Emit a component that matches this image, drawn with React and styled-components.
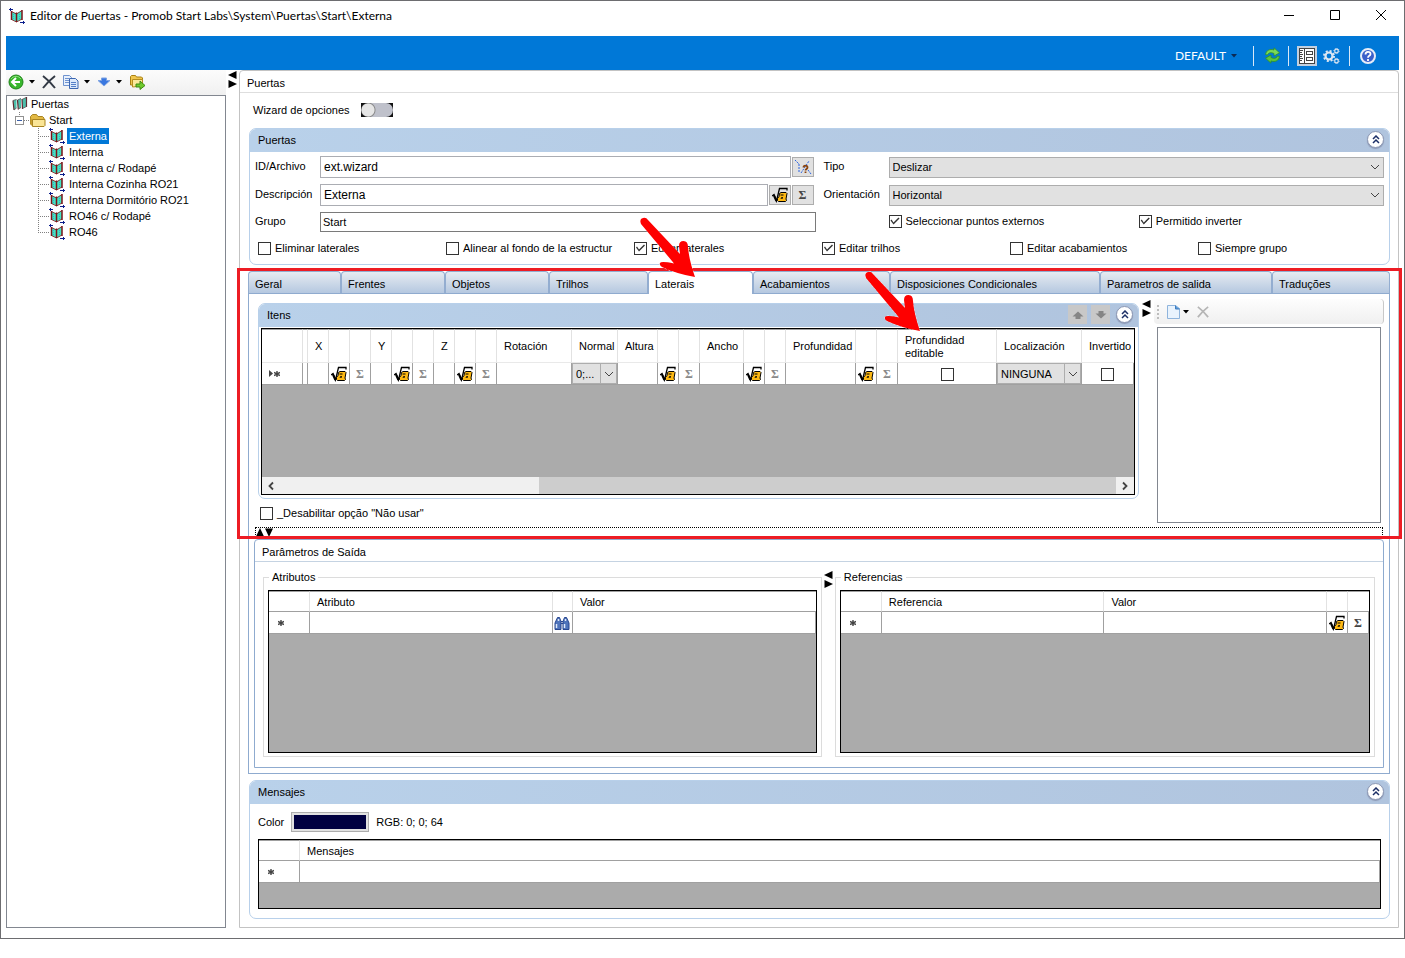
import React from 'react';
import styled, { createGlobalStyle, css } from 'styled-components';

const TREE_ITEMS = [
  'Externa',
  'Interna',
  'Interna c/ Rodapé',
  'Interna Cozinha RO21',
  'Interna Dormitório RO21',
  'RO46 c/ Rodapé',
  'RO46',
];

const TABS = [
  { name: 'Geral', size: 93 },
  { name: 'Frentes', size: 104 },
  { name: 'Objetos', size: 104 },
  { name: 'Trilhos', size: 99 },
  { name: 'Laterais', size: 105 },
  { name: 'Acabamientos', size: 137 },
  { name: 'Disposiciones Condicionales', size: 210 },
  { name: 'Parametros de salida', size: 172 },
  { name: 'Traduções', size: 118 },
];

const OPTIONS = [
  { name: 'Eliminar laterales' },
  { name: 'Alinear al fondo de la estructur' },
  { name: 'Editar laterales', on: true },
  { name: 'Editar trilhos', on: true },
  { name: 'Editar acabamientos' },
  { name: 'Siempre grupo' },
];

const ITEM_COLUMNS = [
  { kind: 'marker', width: 41 },
  { kind: 'text', width: 5 },
  { kind: 'text', name: 'X', width: 21 },
  { kind: 'root', width: 21 },
  { kind: 'sum', width: 21 },
  { kind: 'text', name: 'Y', width: 21 },
  { kind: 'root', width: 21 },
  { kind: 'sum', width: 21 },
  { kind: 'text', name: 'Z', width: 21 },
  { kind: 'root', width: 21 },
  { kind: 'sum', width: 21 },
  { kind: 'text', name: 'Rotación', width: 75 },
  { kind: 'select', name: 'Normal', value: '0;...', width: 46 },
  { kind: 'text', name: 'Altura', width: 40 },
  { kind: 'root', width: 21 },
  { kind: 'sum', width: 21 },
  { kind: 'text', name: 'Ancho', width: 44 },
  { kind: 'root', width: 21 },
  { kind: 'sum', width: 21 },
  { kind: 'text', name: 'Profundidad', width: 70 },
  { kind: 'root', width: 21 },
  { kind: 'sum', width: 21 },
  { kind: 'check', name: 'Profundidad editable', width: 99 },
  { kind: 'select', name: 'Localización', value: 'NINGUNA', width: 85 },
  { kind: 'check', name: 'Invertido' },
];

const ATTRIBUTE_COLUMNS = [
  { kind: 'marker', width: 41 },
  { kind: 'text', name: 'Atributo' },
  { kind: 'find', width: 20 },
  { kind: 'text', name: 'Valor' },
];

const REFERENCE_COLUMNS = [
  { kind: 'marker', width: 41 },
  { kind: 'text', name: 'Referencia' },
  { kind: 'text', name: 'Valor' },
  { kind: 'root', width: 21 },
  { kind: 'sum', width: 21, dark: true },
];

const MESSAGE_COLUMNS = [
  { kind: 'marker', width: 41 },
  { kind: 'text', name: 'Mensajes' },
];

/* icons */

const DoorIcon = () => (
  <svg width="16" height="16" viewBox="0 0 16 16" aria-hidden="true">
    <path d="M2.500 3.500L7 5.500V13.500L2.500 11.500zM8 5.500L13 2.500V11L8 13.500z" fill="#45e3c3" />
    <path d="M4.500 6v5.500M10.500 6v5" stroke="#2fb4cf" strokeDasharray="1 1" />
    <path d="M2.500 3v9M7.500 4.500v9.500M13 2v10" stroke="#7c1418" strokeWidth="1.500" />
    <path d="M2.500 3.500L7.500 6 13 2.500M2.500 11.500L7.500 14 13 11" stroke="#7c1418" strokeWidth=".8" fill="none" />
    <path d="M0 1h4v1H0zM1 0h1v3H1zM11 14h5v1h-5zM14 13h1v3h-1z" fill="#0c1f8c" shapeRendering="crispEdges" />
  </svg>
);

const DoorsIcon = () => (
  <svg width="16" height="16" viewBox="0 0 16 16" aria-hidden="true">
    <path d="M1 4.500l3.500-1V12L2 14zM5.500 4L9 2.500V11.500L6.500 13zM10 3.500L14 1.500V10.500L10.500 12.500z" fill="#4cbfab" />
    <path d="M1 4.500L2 14M5.500 4l.8 9.500M10 3l.5 10M14.500 1v10" stroke="#5f2b31" strokeWidth="1.200" />
    <path d="M1 4.500l3.500-1M5.500 4L9 2.500M10 3.500l4-2M2 14l2.500-2M6.500 13L9 11.500M10.500 12.500l4-2" stroke="#5b5256" strokeWidth=".8" />
  </svg>
);

const FolderIcon = () => (
  <svg width="16" height="16" viewBox="0 0 16 16" aria-hidden="true">
    <path d="M.5 12V4.500L2.500 2.500h4l1.500 2h4.500l1.500 1.500v7z" fill="#e2b944" stroke="#a88423" />
    <path d="M2.500 14.500l-2-2V6l2 1.500z" fill="#c99f30" />
    <path d="M2.500 14.500v-7h12.500v6l-1 1z" fill="#fae596" stroke="#a88423" />
  </svg>
);

const BackIcon = () => (
  <svg width="16" height="16" viewBox="0 0 16 16" aria-hidden="true">
    <circle cx="8" cy="8" r="7" fill="#38b62c" stroke="#1e8418" />
    <path d="M3 5a6 6 0 0 1 10 0" stroke="#8be07c" fill="none" />
    <path d="M8 4L4 8l4 4M4.500 8H12" stroke="#fff" strokeWidth="2" fill="none" />
  </svg>
);

const DeleteIcon = ({ color = '#333a45', size = 14 }) => (
  <svg width={size} height={size} viewBox="0 0 14 14" aria-hidden="true">
    <path d="M1 1c4 3 8 7 12 12M13 1C9 4 5 8 1 13" stroke={color} strokeWidth="2" fill="none" />
  </svg>
);

const CopyIcon = () => (
  <svg width="16" height="14" viewBox="0 0 16 14" aria-hidden="true">
    <path d="M.5.5h6l2 2v8h-8z" fill="#e8f0fc" stroke="#6f93cf" />
    <path d="M2 3.500h4M2 5.500h5M2 7.500h4" stroke="#6f93cf" />
    <path d="M6.500 3.500h6l2.500 2.500v7.500h-8.500z" fill="#dce9fb" stroke="#3c66b0" />
    <path d="M8 7.500h5M8 9.500h5M8 11.500h5" stroke="#5580c8" />
  </svg>
);

const DownIcon = () => (
  <svg width="14" height="10" viewBox="0 0 14 10" aria-hidden="true">
    <path d="M4.500 1h5v2.500H13L7 9 1 3.500h3.500z" fill="#3a78e0" stroke="#7ea3e2" />
  </svg>
);

const ExportIcon = () => (
  <svg width="16" height="16" viewBox="0 0 16 16" aria-hidden="true">
    <path d="M1.500 11V2.500l1-1h4l1 1.500h5l1 1v7z" fill="#f0c64e" stroke="#a98114" />
    <path d="M3.500 13V5.500h10V12z" fill="#fbe99a" stroke="#b58d20" />
    <path d="M7 10h4V7l5 4.500-5 4v-2.500H7z" fill="#6fca2c" stroke="#3d8a12" />
  </svg>
);

const Caret = ({ color = '#000' }) => (
  <svg width="6" height="4" viewBox="0 0 6 4" aria-hidden="true">
    <path d="M0 0h6L3 3.500z" fill={color} />
  </svg>
);

const RefreshIcon = () => (
  <svg width="17" height="17" viewBox="0 0 17 17" aria-hidden="true">
    <path d="M1.500 7.500C2 3.500 6 1.500 10 3V.8l5.500 5L10 9V6.500C7 5 4.500 5.500 3.500 8z" fill="#79d957" stroke="#2f8f2a" strokeWidth=".8" />
    <path d="M15.500 9.500c-.5 4-4.500 6-8.500 4.500v2.200l-5.500-5L7 8v2.500c3 1.500 5.500 1 6.500-1.500z" fill="#5cc43c" stroke="#2f8f2a" strokeWidth=".8" />
  </svg>
);

const FormIcon = () => (
  <svg width="16" height="16" viewBox="0 0 16 16" shapeRendering="crispEdges" aria-hidden="true">
    <path d="M0 0h16v16h-16z" fill="#444" />
    <path d="M1 1h4v14h-4zM6 1h9v14h-9z" fill="#fff" />
    <path d="M1 2h3v1h-3zM1 4h2v1h-2zM1 6h3v1h-3zM1 8h2v1h-2zM1 10h3v1h-3zM1 12h2v1h-2zM7 3h7v4h-7zM7 9h7v4h-7z" fill="#444" />
    <path d="M8 4h5v2h-5zM8 10h5v2h-5z" fill="#fff" />
  </svg>
);

const GearsIcon = () => (
  <svg width="17" height="16" viewBox="0 0 17 16" fill="none" stroke="#dce6f2" aria-hidden="true">
    <circle cx="6" cy="8" r="3.500" strokeWidth="2.200" />
    <circle cx="6" cy="8" r="5" strokeWidth="2" strokeDasharray="2 1.930" />
    <circle cx="13.500" cy="3" r="1.800" strokeWidth="1.200" />
    <circle cx="13.500" cy="3" r="2.600" strokeDasharray="1 1" />
    <circle cx="13.500" cy="13" r="1.800" strokeWidth="1.200" />
    <circle cx="13.500" cy="13" r="2.600" strokeDasharray="1 1" />
  </svg>
);

const HelpIcon = () => (
  <svg width="18" height="18" viewBox="0 0 18 18" aria-hidden="true">
    <circle cx="9" cy="9" r="7" fill="#3a5fca" stroke="#e6ecf8" strokeWidth="2" />
    <path d="M6.500 7.500C6.500 4 11.500 4 11.500 7c0 2-2.500 1.700-2.500 3.700M9 12v2" stroke="#fff" strokeWidth="1.800" fill="none" />
  </svg>
);

const RootIcon = () => (
  <svg width="16" height="16" viewBox="0 0 16 16" aria-hidden="true">
    <path d="M0 9l2-1.500L4.500 14 7.500 1.500H15V3.500" fill="none" stroke="#000" strokeWidth="1.300" />
    <path d="M1.800 8l2.600 6" stroke="#000" strokeWidth="2" />
    <path d="M7.500 6.500l1.500-1h5l1 1-1 5.500.5 1.500-1 1H6.500l-1-1v-2L7 9.500z" fill="#fdb813" stroke="#000" />
    <path d="M8.500 12l1-2h1.500l-.5 2zM8.500 7.500h3v1h-3z" fill="#000" />
    <path d="M9.300 11.500l.4-.8h.6l-.2.800z" fill="#fdb813" />
  </svg>
);

const PathIcon = () => (
  <svg width="18" height="16" viewBox="0 0 18 16" aria-hidden="true">
    <path d="M1 1l4 4M5 5v8M7 14l8-12M14 11l3 4" stroke="#2a62e0" strokeDasharray="2 1" fill="none" />
    <path d="M9.500 8.500c0-2.500 4-2.500 4 0 0 1.500-2 1.500-2 3M11.500 12.500v1.500" stroke="#8a4410" strokeWidth="1.800" fill="none" />
  </svg>
);

const BinocularsIcon = () => (
  <svg width="16" height="14" viewBox="0 0 16 14" aria-hidden="true">
    <path d="M3.500 1.500h2l1.500 4v8H1V7zM10.500 1.500h2L15 7v6.500H9v-8z" fill="#4f74bb" stroke="#27458f" />
    <path d="M2.500 8v4M4.500 3v2M10.500 8v4M11.500 3v2" stroke="#dfe9fa" strokeWidth="1.500" />
    <path d="M7 5.500h2M7 7.500h2" stroke="#27458f" />
  </svg>
);

const PageIcon = () => (
  <svg width="13" height="14" viewBox="0 0 13 14" aria-hidden="true">
    <path d="M.5.5h8l4 3v10H.5z" fill="#e9f3fd" stroke="#8fb4dc" />
    <path d="M8.500.5v3.500h4" fill="#5d9ad6" stroke="#3f7dc0" />
  </svg>
);

const Chevron = ({ dir = 'down' }) => (
  <svg width="10" height="10" viewBox="0 0 10 10" fill="none" stroke="#444" aria-hidden="true">
    {dir === 'down' && <path d="M1 3l4 4 4-4" />}
    {dir === 'left' && <path d="M7 1.500L3.500 5 7 8.500" strokeWidth="1.800" />}
    {dir === 'right' && <path d="M3 1.500L6.500 5 3 8.500" strokeWidth="1.800" />}
  </svg>
);

const CollapseIcon = () => (
  <svg width="8" height="9" viewBox="0 0 8 9" fill="none" stroke="#1c2f66" strokeWidth="1.500" aria-hidden="true">
    <path d="M1 4l3-3 3 3M1 8l3-3 3 3" />
  </svg>
);

const MoveIcon = ({ down }) => (
  <svg width="12" height="8" viewBox="0 0 12 8" aria-hidden="true">
    <path d={down ? 'M3.500 0h5v2.500h3L6 7.500.5 2.500h3z' : 'M6 .5l5.500 5h-3V8h-5V5.500h-3z'} fill="#858585" />
  </svg>
);

const SplitArrows = () => (
  <svg width="9" height="17" viewBox="0 0 9 17" aria-hidden="true">
    <path d="M8.500 0v8L0 4zM.5 9v8L9 13z" />
  </svg>
);

const TreeGuide = ({ last }) => (
  <svg width="11" height="16" viewBox="0 0 11 16" shapeRendering="crispEdges" stroke="#808080" strokeDasharray="1 1" aria-hidden="true">
    <path d={last ? 'M.5 0v9' : 'M.5 0v16'} />
    <path d="M0 8.500h11" />
  </svg>
);

const PointerArrow = () => (
  <svg width="60" height="64" viewBox="0 0 60 64" aria-hidden="true">
    <path
      d="M2 8Q0 3 4 2Q7 1 9 4L41 38L40 30Q40 25 44.500 25Q49 25 49 31Q50 44 56 61Q38 58 23 51Q20 49 21 47Q22 45 35 47.500L33 45Z"
      fill="#fe0000"
      stroke="#fff"
      strokeDasharray="2 2"
      paintOrder="stroke"
    />
  </svg>
);

/* shared pieces */

const Check = ({ name, on }) => (
  <CheckLabel>
    <Box type="checkbox" defaultChecked={on} />
    {name}
  </CheckLabel>
);

const Collapse = () => (
  <RoundButton type="button" aria-label="Contraer">
    <CollapseIcon />
  </RoundButton>
);

const Combo = ({ id, label, value, small }) => (
  <ComboWrap>
    <Select id={id} aria-label={label} defaultValue={value} $small={small}>
      <option>{value}</option>
    </Select>
    <ComboArrow $small={small}>
      <Chevron />
    </ComboArrow>
  </ComboWrap>
);

const Cell = ({ col, current }) => {
  if (col.kind === 'marker') {
    return (
      <Marker $current={current}>
        {current && <svg width="5" height="7" viewBox="0 0 5 7"><path d="M0 0l4 3.500L0 7z" fill="#444" /></svg>}
        <svg width="6" height="6" viewBox="0 0 6 6" stroke="#444" strokeWidth="1.400"><path d="M3 0v6M0 1.500l6 3M6 1.500l-6 3" /></svg>
      </Marker>
    );
  }
  if (col.kind === 'root') return <CellButton type="button" aria-label="Fórmula"><RootIcon /></CellButton>;
  if (col.kind === 'sum') return <CellButton type="button" $dark={col.dark}>Σ</CellButton>;
  if (col.kind === 'find') return <CellButton type="button" aria-label="Buscar"><BinocularsIcon /></CellButton>;
  if (col.kind === 'check') return <Box type="checkbox" aria-label={col.name} />;
  if (col.kind === 'select') return <Combo small label={col.name} value={col.value} />;
  return null;
};

const DataTable = ({ columns, tall }) => (
  <Table>
    <colgroup>
      {columns.map((col, i) => (
        <col key={i} width={col.width} />
      ))}
    </colgroup>
    <thead>
      <tr>
        {columns.map((col, i) => (
          <Th key={i} $tall={tall}>{col.name}</Th>
        ))}
      </tr>
    </thead>
    <tbody>
      <tr>
        {columns.map((col, i) => (
          <Td key={i}>
            <Cell col={col} current={tall} />
          </Td>
        ))}
      </tr>
    </tbody>
  </Table>
);

const App = () => (
  <Page>
    <GlobalStyle />
    <Window>
      <TitleBar>
        <DoorIcon />
        <Title>Editor de Puertas - Promob Start Labs\System\Puertas\Start\Externa</Title>
        <WindowButton type="button" aria-label="Minimizar">
          <svg width="11" height="11" viewBox="0 0 11 11" stroke="#000"><path d="M0 5.500h10" /></svg>
        </WindowButton>
        <WindowButton type="button" aria-label="Maximizar">
          <svg width="11" height="11" viewBox="0 0 11 11" stroke="#000" fill="none"><path d="M.5.5h9v9h-9z" /></svg>
        </WindowButton>
        <WindowButton type="button" aria-label="Cerrar">
          <svg width="11" height="11" viewBox="0 0 11 11" stroke="#000"><path d="M0 0l10 10M10 0L0 10" /></svg>
        </WindowButton>
      </TitleBar>

      <Ribbon>
        <RibbonMenu type="button">
          DEFAULT
          <Caret color="#0b2a55" />
        </RibbonMenu>
        <Divider />
        <RibbonButton type="button" aria-label="Actualizar"><RefreshIcon /></RibbonButton>
        <Divider />
        <RibbonButton type="button" aria-label="Formulario" $active><FormIcon /></RibbonButton>
        <RibbonButton type="button" aria-label="Configurar"><GearsIcon /></RibbonButton>
        <Divider />
        <RibbonButton type="button" aria-label="Ayuda"><HelpIcon /></RibbonButton>
      </Ribbon>

      <Body>
        <Sidebar>
          <Toolbar>
            <ToolButton type="button" aria-label="Nuevo"><BackIcon /><Caret /></ToolButton>
            <ToolButton type="button" aria-label="Eliminar"><DeleteIcon /></ToolButton>
            <ToolButton type="button" aria-label="Copiar"><CopyIcon /><Caret /></ToolButton>
            <ToolButton type="button" aria-label="Mover"><DownIcon /><Caret /></ToolButton>
            <ToolButton type="button" aria-label="Exportar"><ExportIcon /></ToolButton>
          </Toolbar>
          <Tree>
            <TreeRow $indent={5}><DoorsIcon /><TreeText>Puertas</TreeText></TreeRow>
            <TreeRow $indent={8}>
              <svg width="15" height="16" viewBox="0 0 15 16" shapeRendering="crispEdges" fill="none" aria-hidden="true">
                <path d="M4.500 0v4M9 8.500h6" stroke="#808080" strokeDasharray="1 1" />
                <path d="M.5 4.500h8v8h-8z" fill="#fff" stroke="#919191" />
                <path d="M2 8.500h5" stroke="#3a5fa8" />
              </svg>
              <FolderIcon />
              <TreeText>Start</TreeText>
            </TreeRow>
            {TREE_ITEMS.map((item, i) => (
              <TreeRow key={item} $indent={31}>
                <TreeGuide last={i === TREE_ITEMS.length - 1} />
                <DoorIcon />
                <TreeText $leaf $selected={i === 0}>{item}</TreeText>
              </TreeRow>
            ))}
          </Tree>
        </Sidebar>

        <Splitter><SplitArrows /></Splitter>

        <Main>
          <MainHeader>Puertas</MainHeader>
          <Content>
            <WizardRow>
              Wizard de opciones
              <Toggle type="checkbox" role="switch" />
            </WizardRow>

            <Panel>
              <PanelHeader>Puertas<Collapse /></PanelHeader>
              <Form>
                <Field>
                  <FieldLabel htmlFor="id">ID/Archivo</FieldLabel>
                  <Input id="id" defaultValue="ext.wizard" />
                  <IconButton type="button" aria-label="Generar"><PathIcon /></IconButton>
                  <FieldEnd />
                </Field>
                <Field>
                  <FieldLabel htmlFor="tipo">Tipo</FieldLabel>
                  <Combo id="tipo" value="Deslizar" />
                </Field>
                <Field>
                  <FieldLabel htmlFor="descripcion">Descripción</FieldLabel>
                  <Input id="descripcion" defaultValue="Externa" />
                  <IconButton type="button" aria-label="Fórmula"><RootIcon /></IconButton>
                  <IconButton type="button">Σ</IconButton>
                  <FieldEnd />
                </Field>
                <Field>
                  <FieldLabel htmlFor="orientacion">Orientación</FieldLabel>
                  <Combo id="orientacion" value="Horizontal" />
                </Field>
                <Field $short>
                  <FieldLabel htmlFor="grupo">Grupo</FieldLabel>
                  <Input id="grupo" defaultValue="Start" $plain />
                </Field>
                <Field $short>
                  <FieldLabel as="span" />
                  <Halves>
                    <Check name="Seleccionar puntos externos" on />
                    <Check name="Permitido inverter" on />
                  </Halves>
                </Field>
              </Form>
              <Options>
                {OPTIONS.map((option) => (
                  <Check key={option.name} name={option.name} on={option.on} />
                ))}
              </Options>
            </Panel>

            <TabArea>
              <Tabs role="tablist">
                {TABS.map((tab) => (
                  <Tab key={tab.name} type="button" role="tab" $size={tab.size} $active={tab.name === 'Laterais'}>
                    {tab.name}
                  </Tab>
                ))}
              </Tabs>
              <TabBody>
                <Upper>
                  <Items>
                    <Panel>
                      <PanelHeader>
                        Itens
                        <MoveButtons>
                          <MoveButton type="button" aria-label="Subir"><MoveIcon /></MoveButton>
                          <MoveButton type="button" aria-label="Bajar"><MoveIcon down /></MoveButton>
                        </MoveButtons>
                        <Collapse />
                      </PanelHeader>
                      <ItemsGrid>
                        <DataTable columns={ITEM_COLUMNS} tall />
                        <ScrollBar>
                          <ScrollButton type="button" aria-label="Izquierda"><Chevron dir="left" /></ScrollButton>
                          <ScrollTrack><ScrollThumb /></ScrollTrack>
                          <ScrollButton type="button" aria-label="Derecha"><Chevron dir="right" /></ScrollButton>
                        </ScrollBar>
                      </ItemsGrid>
                    </Panel>
                    <DisableRow><Check name={'_Desabilitar opção "Não usar"'} /></DisableRow>
                  </Items>
                  <Splitter $width={15}><SplitArrows /></Splitter>
                  <Side>
                    <SideToolbar>
                      <Grip />
                      <ToolButton type="button" aria-label="Nuevo" $tight><PageIcon /><Caret /></ToolButton>
                      <ToolButton type="button" aria-label="Eliminar"><DeleteIcon color="#b5b5b5" size={12} /></ToolButton>
                    </SideToolbar>
                    <SideList />
                  </Side>
                </Upper>

                <RowSplitter>
                  <svg width="17" height="9" viewBox="0 0 17 9" aria-hidden="true">
                    <path d="M0 8.500h8L4 0zM9 .5h8L13 9z" />
                  </svg>
                </RowSplitter>

                <Output>
                  <OutputHeader>Parâmetros de Saída</OutputHeader>
                  <Groups>
                    <Group $size={559}>
                      <Legend>Atributos</Legend>
                      <OutputGrid><DataTable columns={ATTRIBUTE_COLUMNS} /></OutputGrid>
                    </Group>
                    <Splitter><SplitArrows /></Splitter>
                    <Group $size={540}>
                      <Legend>Referencias</Legend>
                      <OutputGrid><DataTable columns={REFERENCE_COLUMNS} /></OutputGrid>
                    </Group>
                  </Groups>
                </Output>
              </TabBody>
              <Highlight />
              <Pointer $left={391} $top={-55}><PointerArrow /></Pointer>
              <Pointer $left={616} $top={-1}><PointerArrow /></Pointer>
            </TabArea>

            <Panel>
              <PanelHeader>Mensajes<Collapse /></PanelHeader>
              <ColorRow>
                Color
                <ColorButton type="button" aria-label="Color"><Swatch /></ColorButton>
                RGB: 0; 0; 64
              </ColorRow>
              <MessageGrid><DataTable columns={MESSAGE_COLUMNS} /></MessageGrid>
            </Panel>
          </Content>
        </Main>
      </Body>
    </Window>
  </Page>
);
export default App;

const GlobalStyle = createGlobalStyle`
* {
  box-sizing: border-box;
}
body {
  margin: 0;
  background: #fff;
  color: #000;
  font: 11px/14px "Liberation Sans", Arial, sans-serif;
}
button, input, select {
  font: inherit;
  color: inherit;
  margin: 0;
}
svg {
  display: block;
  flex: none;
}
`;

const Page = styled.div`
  display: flex;
  min-height: 100vh;
  padding-bottom: 19px;
`;

const Window = styled.div`
  flex: 1;
  min-width: 0;
  display: flex;
  flex-direction: column;
  border: 1px solid #6d6d70;
  padding-bottom: 10px;
`;

const TitleBar = styled.header`
  display: flex;
  align-items: center;
  height: 35px;
  padding: 0 0 6px 8px;
`;

const Title = styled.h1`
  flex: 1;
  margin: 0 0 0 5px;
  font: 12px/16px Lato, sans-serif;
`;

const bare = css`
  display: flex;
  align-items: center;
  justify-content: center;
  padding: 0;
  border: 0;
  background: none;
`;

const WindowButton = styled.button`
  ${bare}
  width: 46px;
  height: 28px;
`;

const Ribbon = styled.div`
  display: flex;
  align-items: center;
  justify-content: flex-end;
  height: 34px;
  margin: 0 5px;
  padding: 5px 15px 0 0;
  background: #0078d7;
`;

const RibbonMenu = styled.button`
  ${bare}
  gap: 5px;
  margin-right: 16px;
  color: #fff;
  font: 12px/16px Lato, sans-serif;
`;

const Divider = styled.span`
  width: 1px;
  height: 20px;
  background: #d8e8f8;
`;

const RibbonButton = styled.button`
  ${bare}
  width: 20px;
  height: 20px;
  margin: 0 6px 0 8px;
  background: ${(props) => (props.$active ? '#c3d0df' : 'none')};

  & + & {
    margin: 0 8px 0 -2px;
  }
`;

const Body = styled.div`
  flex: 1;
  display: flex;
  padding: 0 5px;
`;

const Sidebar = styled.aside`
  width: 220px;
  display: flex;
  flex-direction: column;
`;

const Toolbar = styled.div`
  display: flex;
  align-items: center;
  gap: 7px;
  height: 25px;
  padding: 0 0 2px 2px;
  background: linear-gradient(#fcfcfc, #f0f0f0);
`;

const ToolButton = styled.button`
  ${bare}
  gap: ${(props) => (props.$tight ? 3 : 5)}px;
`;

const Tree = styled.ul`
  flex: 1;
  margin: 0;
  padding: 0;
  border: 1px solid #828790;
  list-style: none;
`;

const TreeRow = styled.li`
  display: flex;
  align-items: center;
  height: 16px;
  padding-left: ${(props) => props.$indent}px;
`;

const TreeText = styled.span`
  margin-left: ${(props) => (props.$leaf ? 2 : 1)}px;
  padding: 0 2px;
  line-height: 16px;
  ${(props) => props.$selected && css`
    background: #0078d7;
    color: #fff;
  `}
`;

const Splitter = styled.div`
  display: flex;
  justify-content: center;
  flex: none;
  width: ${(props) => props.$width || 13}px;
  padding-top: 1px;
`;

const Main = styled.main`
  flex: 1;
  min-width: 0;
  border: 1px solid #c3c3c3;
  border-radius: 4px 4px 0 0;
`;

const MainHeader = styled.div`
  height: 22px;
  padding: 5px 7px;
  border-bottom: 1px solid #dedede;
`;

const Content = styled.div`
  padding: 0 8px 8px 9px;
`;

const WizardRow = styled.label`
  display: flex;
  align-items: center;
  gap: 11px;
  height: 35px;
  padding: 0 0 1px 4px;
`;

const Toggle = styled.input`
  appearance: none;
  display: flex;
  width: 32px;
  height: 14px;
  background: #111;

  &::before {
    content: '';
    width: 32px;
    height: 14px;
    border-radius: 7px;
    background: radial-gradient(circle at 7px 7px, #e6e6e6 6px, #8a8a8a 7px, #bfc1cb 8px);
  }
`;

const Panel = styled.section`
  border: 1px solid #b8d0ea;
  border-radius: 7px;
`;

const PanelHeader = styled.div`
  display: flex;
  align-items: center;
  justify-content: space-between;
  height: 23px;
  padding: 0 5px 2px 8px;
  border-radius: 6px 6px 0 0;
  background: linear-gradient(90deg, #b9d1ea, #b0c4de);
`;

const RoundButton = styled.button`
  ${bare}
  width: 17px;
  height: 17px;
  border: 1px solid #8c98b4;
  border-radius: 50%;
  background: #fff;
  box-shadow: 0 1px 1px #8c98b4;
`;

const Form = styled.div`
  display: grid;
  grid-template-columns: 1fr 1fr;
  gap: 6px 8px;
  padding: 4px 5px 0;
`;

const Field = styled.div`
  display: flex;
  align-items: center;
  gap: 1px;
  height: ${(props) => (props.$short ? 20 : 22)}px;
`;

const FieldLabel = styled.label`
  flex: none;
  width: 64px;
  padding-bottom: 2px;
`;

const FieldEnd = styled.span`
  width: 1px;
`;

const Input = styled.input`
  flex: 1;
  min-width: 0;
  height: 22px;
  padding: 0 3px;
  border: 1px solid #abadb3;
  font-size: 12px;
  ${(props) => props.$plain && css`
    height: 20px;
    padding: 0 2px;
    border-color: #7a7a7a;
    font-size: 11px;
  `}
`;

const IconButton = styled.button`
  ${bare}
  width: 22px;
  height: 20px;
  border: 1px solid #adadad;
  background: #e1e1e1;
  color: #444;
  font: bold 12px/14px "Liberation Serif", serif;
`;

const ComboWrap = styled.span`
  position: relative;
  flex: 1;
  display: block;
  height: 21px;
`;

const Select = styled.select`
  appearance: none;
  display: block;
  width: 100%;
  height: 21px;
  padding: 0 ${(props) => (props.$small ? 17 : 20)}px 0 3px;
  border: 1px solid #adadad;
  border-radius: 0;
  background: #e1e1e1;
`;

const ComboArrow = styled.span`
  position: absolute;
  top: 1px;
  right: 1px;
  bottom: 1px;
  display: flex;
  align-items: center;
  justify-content: center;
  width: 16px;
  border-left: ${(props) => (props.$small ? '1px solid #adadad' : 0)};
  pointer-events: none;
`;

const Halves = styled.div`
  flex: 1;
  display: grid;
  grid-template-columns: 1fr 1fr;
  gap: 5px;
  padding-bottom: 2px;
`;

const CheckLabel = styled.label`
  display: flex;
  align-items: center;
  gap: 4px;
  white-space: nowrap;
`;

const Box = styled.input`
  appearance: none;
  flex: none;
  width: 13px;
  height: 13px;
  border: 1px solid #333;
  background: #fff;
  vertical-align: middle;

  &:checked::before {
    content: '';
    display: block;
    width: 11px;
    height: 11px;
    background: #333;
    clip-path: polygon(1px 5px, 2px 4px, 4px 7px, 9px 2px, 10px 3px, 4px 9px);
  }
`;

const Options = styled.div`
  display: grid;
  grid-template-columns: repeat(6, 1fr);
  height: 32px;
  padding: 0 3px 0 8px;
`;

const TabArea = styled.div`
  position: relative;
  margin: 6px 0 6px -1px;
`;

const Tabs = styled.div`
  display: flex;
`;

const Tab = styled.button`
  flex: ${(props) => props.$size} 1 ${(props) => props.$size}px;
  min-width: 0;
  height: 22px;
  padding: 2px 6px 0;
  border: 1px solid #93add0;
  border-width: 1px 1px 0 1px;
  border-radius: 4px 4px 0 0;
  background: linear-gradient(#e6ebf1, #b5c8e0);
  text-align: left;
  white-space: nowrap;
  ${(props) => props.$active && css`
    height: 23px;
    margin-bottom: -1px;
    padding-bottom: 1px;
    background: #fff;
    z-index: 1;
  `}
`;

const TabBody = styled.div`
  border: 1px solid #8fabcf;
  padding: 5px;
`;

const Upper = styled.div`
  display: flex;
`;

const Items = styled.div`
  flex: 1;
  min-width: 0;
  padding: 4px 0 0 4px;
`;

const gridBox = css`
  display: flex;
  flex-direction: column;
  border: 1px solid #000;
  background: #ababab;
`;

const ItemsGrid = styled.div`
  ${gridBox}
  height: 167px;
  margin: 1px 3px 3px 2px;
`;

const Table = styled.table`
  width: 100%;
  table-layout: fixed;
  border-collapse: separate;
  border-spacing: 0;
  background: #fff;
`;

const Th = styled.th`
  height: ${(props) => (props.$tall ? 34 : 21)}px;
  padding: 1px 0 0 7px;
  border-top: 1px solid #a0a0a0;
  border-right: 1px solid #e2e2e2;
  border-bottom: 1px solid ${(props) => (props.$tall ? '#e9e9e9' : '#a0a0a0')};
  font-weight: normal;
  text-align: left;
  line-height: 13px;

  &:last-child {
    border-right: 0;
  }
`;

const Td = styled.td`
  height: 22px;
  padding: 0;
  border-right: 1px solid #a0a0a0;
  border-bottom: 1px solid #a0a0a0;
  text-align: center;
  line-height: 14px;
`;

const Marker = styled.span`
  display: flex;
  align-items: center;
  padding-left: ${(props) => (props.$current ? 7 : 9)}px;
`;

const CellButton = styled.button`
  ${bare}
  width: 100%;
  height: 20px;
  color: ${(props) => (props.$dark ? '#444' : '#8a8a8a')};
  font: bold 12px/14px "Liberation Serif", serif;
`;

const ScrollBar = styled.div`
  display: flex;
  height: 17px;
  margin-top: auto;
  background: #f0f0f0;
`;

const ScrollButton = styled.button`
  ${bare}
  width: 18px;
`;

const ScrollTrack = styled.div`
  flex: 1;
  display: flex;
  justify-content: flex-end;
`;

const ScrollThumb = styled.div`
  width: 69%;
  background: #cdcdcd;
`;

const DisableRow = styled.div`
  display: flex;
  height: 28px;
  padding-left: 2px;
`;

const MoveButtons = styled.span`
  display: flex;
  gap: 4px;
  margin-left: auto;
  padding-right: 6px;
`;

const MoveButton = styled.button`
  ${bare}
  width: 19px;
  height: 19px;
  background: #c8c8c8;
`;

const Side = styled.div`
  flex: none;
  width: 230px;
  display: flex;
  flex-direction: column;
  padding-bottom: 4px;
`;

const SideToolbar = styled.div`
  display: flex;
  align-items: center;
  gap: 8px;
  height: 25px;
  padding-left: 3px;
  border-right: 1px solid #c8c8c8;
  border-radius: 4px;
  background: linear-gradient(#fdfdfd, #f0f0f0);
`;

const Grip = styled.span`
  height: 14px;
  border-left: 2px dotted #bdbdbd;
`;

const SideList = styled.div`
  flex: 1;
  margin: 3px 3px 0;
  border: 1px solid #828790;
`;

const RowSplitter = styled.div`
  height: 12px;
  margin: 0 1px;
  border: 1px dotted #000;
  border-bottom: 0;
`;

const Output = styled.section`
  border: 1px solid #8fabcf;
  border-radius: 4px 4px 0 0;
`;

const OutputHeader = styled.div`
  height: 22px;
  padding: 5px 7px;
  border-bottom: 1px solid #c5d3e2;
`;

const Groups = styled.div`
  display: flex;
  padding: 8px 8px 10px;
`;

const Group = styled.fieldset`
  flex: ${(props) => props.$size} 1 0;
  min-width: 0;
  margin: 0;
  padding: 6px 4px 3px;
  border: 1px solid #dcdcdc;
`;

const Legend = styled.legend`
  margin-left: 1px;
  padding: 0 3px;
`;

const OutputGrid = styled.div`
  ${gridBox}
  height: 163px;
`;

const Highlight = styled.div`
  position: absolute;
  top: -3px;
  left: -11px;
  right: -12px;
  height: 271px;
  border: 3px solid #ed1c24;
  pointer-events: none;
  z-index: 2;
`;

const Pointer = styled.span`
  position: absolute;
  top: ${(props) => props.$top}px;
  left: ${(props) => props.$left}px;
  pointer-events: none;
  z-index: 3;
`;

const ColorRow = styled.div`
  display: flex;
  align-items: center;
  gap: 7px;
  padding: 8px 8px 7px;
`;

const ColorButton = styled.button`
  ${bare}
  width: 78px;
  height: 20px;
  padding: 2px;
  border: 1px solid #adadad;
  background: #e1e1e1;
`;

const Swatch = styled.span`
  width: 72px;
  height: 14px;
  background: #000040;
`;

const MessageGrid = styled.div`
  ${gridBox}
  height: 70px;
  margin: 0 8px 9px;
`;
